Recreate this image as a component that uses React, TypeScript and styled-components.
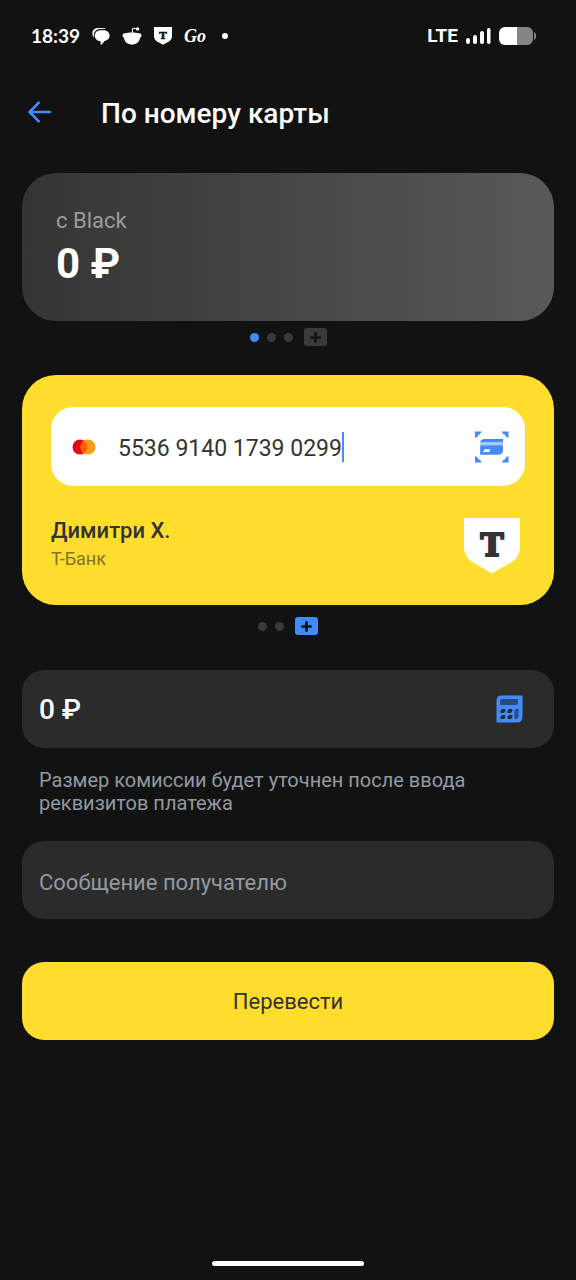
import React, { useState } from "react";
import styled, { createGlobalStyle } from "styled-components";

const color = {
  bg: "#121212",
  surface: "#2b2b2b",
  blue: "#428bf9",
  yellow: "#ffdd2d",
  ink: "#333333",
  muted: "#9299a2",
  dot: "#3a3a3a",
  white: "#ffffff",
};

const GlobalStyle = createGlobalStyle`
  *, *::before, *::after { box-sizing: border-box; }
  body {
    margin: 0;
    background: ${color.bg};
    color: ${color.white};
    font-family: Roboto, "Liberation Sans", sans-serif;
  }
  button, input { font: inherit; color: inherit; }
  svg { display: block; flex: none; }
`;

const Screen = styled.div`
  min-height: 100vh;
  display: flex;
  flex-direction: column;
`;

const StatusBar = styled.div`
  height: 72px;
  padding: 0 39px 0 31px;
  display: flex;
  align-items: center;
  justify-content: space-between;
`;

const StatusGroup = styled.div<{ $gap: number }>`
  display: flex;
  align-items: center;
  gap: ${(p) => p.$gap}px;
`;

const Clock = styled.time`
  font: 700 19px/24px Lato, sans-serif;
`;

const Network = styled.span`
  font: 700 19px/24px Roboto, sans-serif;
`;

const Notice = styled.span`
  width: 6px;
  height: 6px;
  margin-left: 4px;
  border-radius: 50%;
  background: ${color.white};
`;

const Header = styled.header`
  height: 80px;
  padding: 0 24px;
  display: flex;
  align-items: center;
  gap: 45px;
`;

const IconButton = styled.button`
  display: flex;
  flex: none;
  padding: 0;
  border: 0;
  background: none;
  cursor: pointer;
`;

const Title = styled.h1`
  margin: 0;
  padding-top: 4px;
  font-size: 28px;
  line-height: 36px;
  font-weight: 500;
`;

const Form = styled.form`
  display: flex;
  flex-direction: column;
  padding: 21px 22px 40px;
`;

const AccountCard = styled.section`
  display: flex;
  flex-direction: column;
  gap: 3px;
  padding: 34px 34px 31px;
  border-radius: 34px;
  background: linear-gradient(90deg, #343434, #595959);
`;

const AccountName = styled.span`
  font-size: 22px;
  line-height: 28px;
  color: #9c9c9c;
`;

const Balance = styled.strong`
  font-size: 42px;
  line-height: 52px;
  font-weight: 700;
`;

const Pager = styled.nav<{ $top: number; $bottom: number }>`
  display: flex;
  align-items: center;
  justify-content: center;
  gap: 8px;
  height: 18px;
  margin: ${(p) => p.$top}px 0 ${(p) => p.$bottom}px;
`;

const Dot = styled.button<{ $active?: boolean }>`
  width: 9px;
  height: 9px;
  padding: 0;
  border: 0;
  border-radius: 50%;
  background: ${(p) => (p.$active ? color.blue : color.dot)};
`;

const AddBadge = styled.button<{ $active?: boolean }>`
  display: flex;
  align-items: center;
  justify-content: center;
  width: 23px;
  height: 18px;
  margin-left: 3px;
  padding: 0;
  border: 0;
  border-radius: 3px;
  background: ${(p) => (p.$active ? color.blue : color.dot)};
`;

const RecipientCard = styled.section`
  padding: 32px 29px 31px;
  border-radius: 34px;
  background: ${color.yellow};
  color: ${color.ink};
`;

const CardNumberField = styled.label`
  display: flex;
  align-items: center;
  height: 79px;
  padding: 0 16px 0 21px;
  border-radius: 22px;
  background: ${color.white};
`;

const CardNumberInput = styled.input`
  field-sizing: content;
  height: 36px;
  margin-left: 22px;
  padding: 4px 0 0;
  border: 0;
  outline: 0;
  background: none;
  font-size: 23px;
`;

const Caret = styled.span`
  width: 2px;
  height: 30px;
  margin-right: auto;
  background: ${color.blue};
`;

const Owner = styled.div`
  display: flex;
  align-items: flex-start;
  justify-content: space-between;
  margin-top: 32px;
  padding-right: 5px;
`;

const OwnerText = styled.div`
  display: flex;
  flex-direction: column;
  gap: 4px;
`;

const OwnerName = styled.span`
  font-size: 22px;
  line-height: 26px;
  font-weight: 500;
`;

const Bank = styled.span`
  font-size: 18px;
  line-height: 22px;
  color: #80742f;
`;

const Field = styled.div`
  display: flex;
  align-items: center;
  height: 78px;
  padding: 0 31px 0 17px;
  border-radius: 22px;
  background: ${color.surface};
`;

const FieldInput = styled.input<{ $large?: boolean }>`
  flex: 1;
  min-width: 0;
  height: 40px;
  padding: ${(p) => (p.$large ? 0 : 4)}px 0 0;
  border: 0;
  outline: 0;
  background: none;
  font-size: ${(p) => (p.$large ? 28 : 22)}px;
  font-weight: ${(p) => (p.$large ? 500 : 400)};
  &::placeholder {
    color: ${color.muted};
    opacity: 1;
  }
`;

const Hint = styled.p`
  max-width: 460px;
  margin: 21px 17px 26px;
  font-size: 20px;
  line-height: 23px;
  color: ${color.muted};
`;

const Submit = styled.button`
  height: 78px;
  margin-top: 43px;
  border: 0;
  border-radius: 22px;
  background: ${color.yellow};
  color: ${color.ink};
  font-size: 22px;
  cursor: pointer;
`;

const HomeBar = styled.div`
  width: 152px;
  height: 5px;
  margin: auto auto 14px;
  border-radius: 3px;
  background: ${color.white};
`;

const ChatIcon = () => (
  <svg width="18" height="20" viewBox="0 0 18 20" aria-hidden="true">
    <path d="M2.200 11.500C1 10.500.4 8.900.4 7.200.4 4.200 2.800 2 6 2h4.200c1.500 0 2.800.4 3.800 1.100H8.200C4.500 3.100 1.900 5.500 1.900 8.900c0 1 .1 1.800.3 2.600z" fill="#fff" />
    <path d="M8.600 4.200h2.800c3.500 0 6.200 2.200 6.200 5.400 0 2.900-2.200 5-5.200 5.500-.9 1.500-2.100 3.100-3.800 4.200v-4.100C5.300 15 2.800 12.700 2.800 9.700c0-3.300 2.500-5.500 5.800-5.500z" fill="#fff" />
  </svg>
);

const RedditIcon = () => (
  <svg width="20" height="20" viewBox="0 0 20 20" aria-hidden="true">
    <path d="M2.800 7.300C5 7.100 7.500 6.500 10 6.500s5 .6 7.200.8c2.800.3 3 3.400.9 4.400C17.500 15.700 14.300 18.500 10 18.500s-7.500-2.800-8.100-6.800C-.2 10.700 0 7.600 2.800 7.300z" fill="#fff" />
    <circle cx="15.600" cy="2.900" r="1.700" fill="#fff" />
    <path d="M10.700 7C10.300 4.500 9.900 3.300 10.900 2.500c1-.6 2.500.2 4.200.3" fill="none" stroke="#fff" strokeWidth="1.100" />
  </svg>
);

const BankIcon = ({ size, back = "#fff", front = color.ink }: { size: number; back?: string; front?: string }) => (
  <svg width={size} height={size} viewBox="0 0 56 56" aria-hidden="true">
    <path d="M0 0h56v29c0 7-3.700 12.500-9.500 15.800L28 55.500 9.500 44.800C3.700 41.500 0 36 0 29z" fill={back} />
    <text
      x="28"
      y="38"
      textAnchor="middle"
      fontFamily="DejaVu Serif, serif"
      fontWeight="700"
      fontSize="31"
      fill={front}
      stroke={front}
      strokeWidth="2"
    >
      T
    </text>
  </svg>
);

const GoLabel = styled.span`
  font: italic 700 18px/20px "Liberation Serif", serif;
`;

const SignalIcon = () => (
  <svg width="25" height="18" viewBox="0 0 25 18" fill="#fff" aria-hidden="true">
    <rect x="0" y="11" width="4" height="6" rx="2" />
    <rect x="7" y="8" width="4" height="9" rx="2" />
    <rect x="14" y="4" width="4" height="13" rx="2" />
    <rect x="21" y="1" width="3.500" height="16" rx="1.700" />
  </svg>
);

const BatteryIcon = () => (
  <svg width="38" height="18" viewBox="0 0 38 18" aria-hidden="true">
    <path d="M18 0h10a6 6 0 0 1 6 6v6a6 6 0 0 1-6 6H18z" fill="#858585" />
    <path d="M18 0H6a6 6 0 0 0-6 6v6a6 6 0 0 0 6 6h12z" fill="#fff" />
    <path d="M35 5c1.400.6 2 2 2 4s-.6 3.400-2 4z" fill="#858585" />
  </svg>
);

const BackIcon = () => (
  <svg width="32" height="32" viewBox="0 0 32 32" fill="none" stroke={color.blue} strokeWidth="2.600" aria-hidden="true">
    <path d="M27 16H6M15.500 5.800L5.500 16l10 10.200" />
  </svg>
);

const PlusIcon = () => (
  <svg width="11" height="11" viewBox="0 0 11 11" stroke={color.bg} strokeWidth="2.600" strokeLinecap="round" aria-hidden="true">
    <path d="M5.500 1.300v8.400M1.300 5.500h8.400" />
  </svg>
);

const MastercardIcon = () => (
  <svg width="24" height="16" viewBox="0 0 24 16" aria-hidden="true">
    <circle cx="8" cy="8" r="7.500" fill="#eb001b" />
    <circle cx="16" cy="8" r="7.500" fill="#f79e1b" />
    <path d="M12 1.650a7.500 7.500 0 0 1 0 12.700a7.500 7.500 0 0 1 0-12.700z" fill="#ff5f00" />
  </svg>
);

const ScanIcon = () => (
  <svg width="35" height="32" viewBox="0 0 35 32" fill={color.blue} aria-hidden="true">
    <path d="M1 .5h6.800L5.800 3.400H4.200v1.800L1 7zM34.500.5h-6.800l2 2.900h1.600v1.800L34.500 7zM1 31.500h6.800l-2-2.900H4.200v-1.800L1 25zM34.500 31.500h-6.800l2-2.900h1.600v-1.800l3.200-1.800z" />
    <path d="M10.500 8H29v3.500H6.200C6.400 9.300 7.900 8 10.500 8z" />
    <path d="M6.200 11.500H29v2.800H6.200z" fill="#a9cbfb" />
    <path fillRule="evenodd" d="M6.200 14.300H29v4.700c0 3.200-1.500 4.700-4.700 4.700H6.200zM10.500 18.200L9 21h6l1.500-2.800z" />
  </svg>
);

const CalculatorIcon = () => (
  <svg width="27" height="28" viewBox="0 0 27 28" aria-hidden="true">
    <path d="M5 .5h21.500V22c0 3.500-1.800 5.500-5.500 5.500H.5V6C.5 2.500 2 .5 5 .5z" fill={color.blue} />
    <path d="M6.500 4H22v3.500c0 1.700-.8 2.500-2.500 2.500H4V6.500C4 4.800 4.800 4 6.500 4z" fill="#2c4a7c" />
    <path d="M6 14h3.300v2.300L8 18H4.500v-2.500zM13 14h3.300v2.300L15 18h-3.500v-2.500zM6 20h3.300v2.300L8 24H4.500v-2.500zM13 20h3.300v2.300L15 24h-3.500v-2.500z" fill="#222c3c" />
    <path d="M20 14h2.500v8L21 24h-2.500v-8.500z" fill="#2c4a7c" />
  </svg>
);

export default function App() {
  const [cardNumber, setCardNumber] = useState("5536 9140 1739 0299");
  const [amount, setAmount] = useState("0 ₽");
  const [message, setMessage] = useState("");

  return (
    <>
      <GlobalStyle />
      <Screen>
        <StatusBar>
          <StatusGroup $gap={12}>
            <Clock>18:39</Clock>
            <ChatIcon />
            <RedditIcon />
            <BankIcon size={18} front={color.bg} />
            <GoLabel>Go</GoLabel>
            <Notice />
          </StatusGroup>
          <StatusGroup $gap={8}>
            <Network>LTE</Network>
            <SignalIcon />
            <BatteryIcon />
          </StatusGroup>
        </StatusBar>

        <Header>
          <IconButton type="button" aria-label="Назад">
            <BackIcon />
          </IconButton>
          <Title>По номеру карты</Title>
        </Header>

        <Form onSubmit={(e) => e.preventDefault()}>
          <AccountCard>
            <AccountName>с Black</AccountName>
            <Balance>0 ₽</Balance>
          </AccountCard>
          <Pager $top={7} $bottom={29} aria-label="Счета">
            <Dot type="button" aria-label="Счёт 1" $active />
            <Dot type="button" aria-label="Счёт 2" />
            <Dot type="button" aria-label="Счёт 3" />
            <AddBadge type="button" aria-label="Добавить счёт">
              <PlusIcon />
            </AddBadge>
          </Pager>

          <RecipientCard>
            <CardNumberField>
              <MastercardIcon />
              <CardNumberInput
                aria-label="Номер карты"
                inputMode="numeric"
                value={cardNumber}
                onChange={(e) => setCardNumber(e.target.value)}
              />
              <Caret />
              <IconButton type="button" aria-label="Сканировать карту">
                <ScanIcon />
              </IconButton>
            </CardNumberField>
            <Owner>
              <OwnerText>
                <OwnerName>Димитри Х.</OwnerName>
                <Bank>Т-Банк</Bank>
              </OwnerText>
              <BankIcon size={56} />
            </Owner>
          </RecipientCard>
          <Pager $top={12} $bottom={35} aria-label="Получатели">
            <Dot type="button" aria-label="Получатель 1" />
            <Dot type="button" aria-label="Получатель 2" />
            <AddBadge type="button" aria-label="Новый получатель" $active>
              <PlusIcon />
            </AddBadge>
          </Pager>

          <Field>
            <FieldInput $large aria-label="Сумма" value={amount} onChange={(e) => setAmount(e.target.value)} />
            <IconButton type="button" aria-label="Калькулятор">
              <CalculatorIcon />
            </IconButton>
          </Field>
          <Hint>Размер комиссии будет уточнен после ввода реквизитов платежа</Hint>
          <Field>
            <FieldInput
              aria-label="Сообщение получателю"
              placeholder="Сообщение получателю"
              value={message}
              onChange={(e) => setMessage(e.target.value)}
            />
          </Field>
          <Submit type="submit">Перевести</Submit>
        </Form>
        <HomeBar />
      </Screen>
    </>
  );
}
